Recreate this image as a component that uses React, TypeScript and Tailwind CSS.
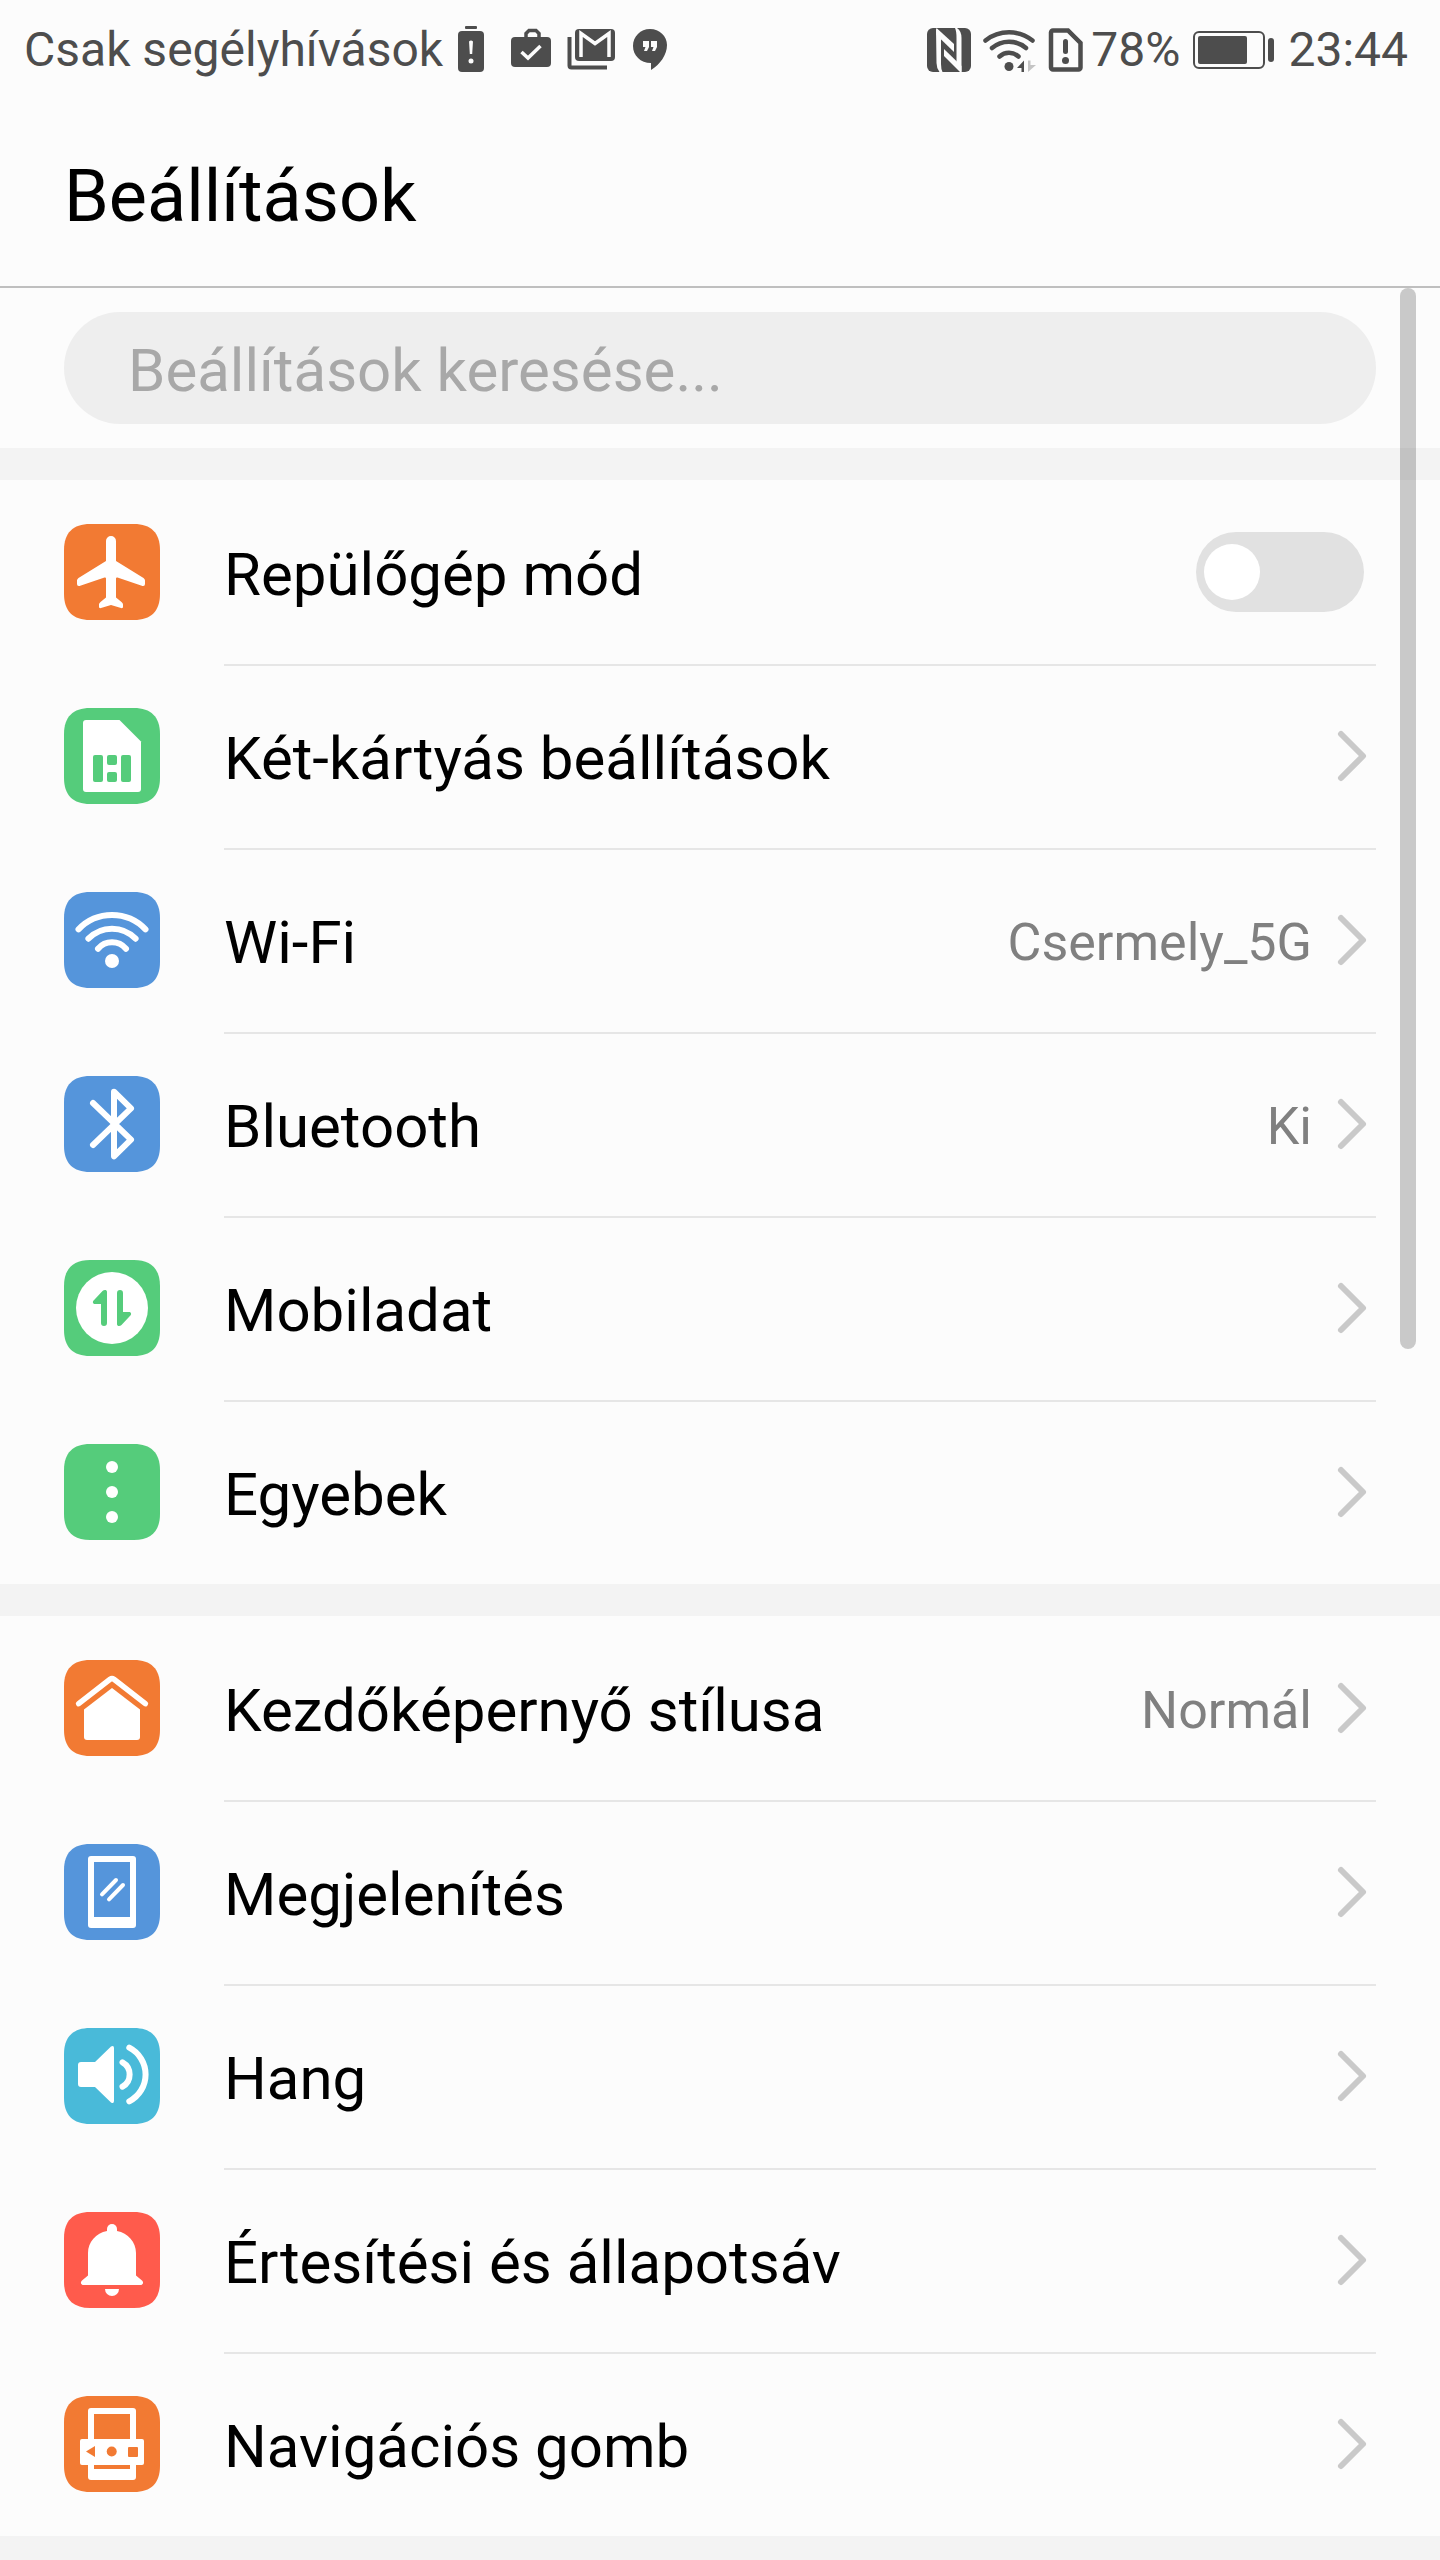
import React from "react";

type Item = {
  label: string;
  icon: React.ReactNode;
  value?: string;
  toggle?: boolean;
};

const ORANGE = "#f27a33";
const GREEN = "#55cc7b";
const BLUE = "#5595db";
const CYAN = "#49bad9";
const RED = "#ff5b4c";

const Tile = ({ color, children }: { color: string; children: React.ReactNode }) => (
  <svg viewBox="0 0 96 96" className="size-24 shrink-0" fill="white" aria-hidden="true">
    <path
      d="M26 0H70C87 0 96 9 96 26V70C96 87 87 96 70 96H26C9 96 0 87 0 70V26C0 9 9 0 26 0Z"
      fill={color}
    />
    {children}
  </svg>
);

const airplane = (
  <Tile color={ORANGE}>
    <path d="M42 17a5 5 0 0 1 10 0V37L79.5 54q1.5 1 1.5 2.5V60q0 2.5-2.5 2L53.5 53.5q-1.5-.3-1.5 1V73.5L57.5 78q1.5 1 1.5 2.5V83q0 1.5-2 1L47 81l-10 3q-2 .5-2-1V80.5q0-1.5 1.5-2.5L42 73.5V54.5q0-1.3-1.5-1L15.5 62q-2.5.5-2.5-2V56.5q0-1.5 1.5-2.5L42 37Z" />
  </Tile>
);

const simCard = (
  <Tile color={GREEN}>
    <path d="M22 12H55.5L77 33.5V81a3 3 0 0 1-3 3H22a3 3 0 0 1-3-3V15a3 3 0 0 1 3-3Z" />
    <g fill={GREEN}>
      <rect x="29" y="47" width="10" height="27" rx="2" />
      <rect x="43" y="47" width="10" height="10" rx="2" />
      <rect x="43" y="64" width="10" height="10" rx="2" />
      <rect x="57" y="47" width="10" height="27" rx="2" />
    </g>
  </Tile>
);

const wifi = (
  <Tile color={BLUE}>
    <g fill="none" stroke="white" strokeWidth="6" strokeLinecap="round">
      <path d="M14.5 37.3A46.4 46.4 0 0 1 81.5 37.3" />
      <path d="M24.4 46.7A32.8 32.8 0 0 1 71.6 46.7" />
      <path d="M34 56.7A18.5 18.5 0 0 1 62 56.7" />
    </g>
    <circle cx="48" cy="69" r="7" />
  </Tile>
);

const bluetooth = (
  <Tile color={BLUE}>
    <path
      d="M29 27L67 63.7L50 80.3V15.7L67 32.3L29 69"
      fill="none"
      stroke="white"
      strokeWidth="6"
      strokeLinecap="round"
      strokeLinejoin="round"
    />
  </Tile>
);

const DataArrow = ({ rotate = 0 }) => (
  <path
    d="M43 32V63a3 3 0 0 1-6 0V44H31C29 44 28.2 42 29.6 40.5L38.5 31C40 29.5 43 29.5 43 32Z"
    fill={GREEN}
    transform={`rotate(${rotate} 48 48)`}
  />
);

const mobileData = (
  <Tile color={GREEN}>
    <circle cx="48" cy="48" r="36" />
    <DataArrow />
    <DataArrow rotate={180} />
  </Tile>
);

const more = (
  <Tile color={GREEN}>
    <circle cx="48" cy="23" r="6" />
    <circle cx="48" cy="48" r="6" />
    <circle cx="48" cy="73" r="6" />
  </Tile>
);

const home = (
  <Tile color={ORANGE}>
    <path
      d="M14.7 43.7L46 19.3Q48 18 50 19.3L81.3 43.7"
      fill="none"
      stroke="white"
      strokeWidth="5.5"
      strokeLinecap="round"
    />
    <path d="M48 28L76 49.5V77a3 3 0 0 1-3 3H23a3 3 0 0 1-3-3V49.5Z" />
  </Tile>
);

const display = (
  <Tile color={BLUE}>
    <rect x="24" y="12" width="48" height="72" rx="3" />
    <rect x="30" y="18" width="36" height="55" fill={BLUE} />
    <path
      d="M38 50.3L52 36M45 55.3L59 41"
      stroke="white"
      strokeWidth="4"
      strokeLinecap="round"
    />
  </Tile>
);

const sound = (
  <Tile color={CYAN}>
    <path d="M17 34H31L47 18.5Q50 17 50 20V73Q50 76 47 74.5L31 59H17a3 3 0 0 1-3-3V37a3 3 0 0 1 3-3Z" />
    <g fill="none" stroke="white" strokeWidth="6" strokeLinecap="round">
      <path d="M58.5 34.3A14 14 0 0 1 58.5 58.7" />
      <path d="M65.3 19.7A30.2 30.2 0 0 1 65.3 73.3" />
    </g>
  </Tile>
);

const bell = (
  <Tile color={RED}>
    <circle cx="48" cy="17" r="5" />
    <path d="M43 17H53V19C64 21 72 30 72 41V63.5L78 68.5C80 70.5 79 73 76.5 73H19.5C17 73 16 70.5 18 68.5L24 63.5V41C24 30 32 21 43 19Z" />
    <path d="M41 77H55A7 7 0 0 1 41 77Z" />
  </Tile>
);

const navButton = (
  <Tile color={ORANGE}>
    <rect x="24" y="12" width="48" height="72" rx="3" />
    <rect x="30" y="18" width="36" height="55" fill={ORANGE} />
    <rect x="16" y="43" width="64" height="26" rx="2" />
    <g fill={ORANGE}>
      <path d="M22 55.5L31 50V61Z" />
      <circle cx="47.7" cy="55.5" r="5" />
      <rect x="64" y="51" width="10" height="10" rx="1" />
    </g>
  </Tile>
);

const groups: Item[][] = [
  [
    { label: "Repülőgép mód", icon: airplane, toggle: true },
    { label: "Két-kártyás beállítások", icon: simCard },
    { label: "Wi-Fi", icon: wifi, value: "Csermely_5G" },
    { label: "Bluetooth", icon: bluetooth, value: "Ki" },
    { label: "Mobiladat", icon: mobileData },
    { label: "Egyebek", icon: more },
  ],
  [
    { label: "Kezdőképernyő stílusa", icon: home, value: "Normál" },
    { label: "Megjelenítés", icon: display },
    { label: "Hang", icon: sound },
    { label: "Értesítési és állapotsáv", icon: bell },
    { label: "Navigációs gomb", icon: navButton },
  ],
];

const Notifications = () => (
  <div className="flex items-center gap-4">
    {/* low battery */}
    <svg viewBox="0 0 32 48" className="h-12 w-8" fill="currentColor" aria-hidden="true">
      <rect x="10" y="0" width="12" height="3" rx="1" />
      <rect x="3" y="5" width="26" height="41" rx="4" />
      <path d="M14 15.5q2-2 4 0L17.2 28h-2.4Z" fill="#fcfcfc" />
      <circle cx="16" cy="35" r="2.5" fill="#fcfcfc" />
    </svg>
    {/* briefcase */}
    <svg viewBox="0 0 48 48" className="size-12" fill="currentColor" aria-hidden="true">
      <path d="M23 13V7.5L26 4.5H33L36 7.5V13" fill="none" stroke="currentColor" strokeWidth="3.5" />
      <rect x="8" y="11" width="40" height="30" rx="4" />
      <path d="M18.5 26L25 32L37.5 20" fill="none" stroke="#fcfcfc" strokeWidth="3.5" />
    </svg>
    {/* stacked mails */}
    <svg viewBox="0 0 48 48" className="size-12" fill="currentColor" aria-hidden="true">
      <path d="M2.5 11V39.5a2 2 0 0 0 2 2H40" fill="none" stroke="currentColor" strokeWidth="4" />
      <rect x="8" y="3" width="40" height="32" rx="4" />
      <path d="M14 31V7.5L28 17.5L42 7.5V31" fill="none" stroke="#fcfcfc" strokeWidth="3.5" />
    </svg>
    {/* chat bubble */}
    <svg viewBox="0 0 40 48" className="h-12 w-10" fill="currentColor" aria-hidden="true">
      <path d="M19 3C28.5 3 36 10 36 19C36 29 29 38.5 20 44V37C9.5 37 2 29.5 2 20C2 10.5 9.5 3 19 3Z" />
      <path d="M12 15h6v6l-2 4h-3l1.5-4H12ZM20 15h6v6l-2 4h-3l1.5-4H20Z" fill="#fcfcfc" />
    </svg>
  </div>
);

const Connectivity = () => (
  <>
    {/* nfc */}
    <svg viewBox="0 0 48 44" className="h-11 w-12" aria-hidden="true">
      <rect width="44" height="44" rx="6" fill="currentColor" />
      <g fill="#fcfcfc">
        <path d="M9 0.5L14 5.5V36Q14 41 15.5 44H12.5Q9.5 40 9.5 35Z" />
        <path d="M9.5 0L27 16V24L9.5 7Z" />
        <path d="M17 21L34.5 38V44H33L17 28Z" />
        <path d="M30 0Q34.5 3 34.5 10V44L29.5 38V10Q29.5 3 28 0Z" />
      </g>
    </svg>
    {/* wifi with traffic arrows */}
    <svg viewBox="0 0 56 44" className="h-11 w-14" fill="currentColor" aria-hidden="true">
      <g fill="none" stroke="currentColor" strokeWidth="4.5" strokeLinecap="round">
        <path d="M2.5 12.5A38 38 0 0 1 49.5 12.5" />
        <path d="M9 20A26 26 0 0 1 43 20" />
        <path d="M16.5 28.5A14 14 0 0 1 35.5 28.5" />
      </g>
      <circle cx="26" cy="38.5" r="4.5" />
      <path d="M34 40L41 32.5V44H38.5V40Z" />
      <path d="M45 32.5H47.5V37H53L45 44Z" fill="#c4c4c4" />
    </svg>
    {/* missing sim */}
    <svg viewBox="0 0 36 44" className="h-11 w-9" fill="currentColor" aria-hidden="true">
      <path
        d="M6 2.5H21L33.5 15V39.5a2 2 0 0 1-2 2H6a2 2 0 0 1-2-2V4.5a2 2 0 0 1 2-2Z"
        fill="none"
        stroke="currentColor"
        strokeWidth="4.5"
      />
      <rect x="16" y="11" width="5" height="15" rx="2.5" />
      <circle cx="18.5" cy="32.5" r="3.5" />
    </svg>
  </>
);

const Battery = () => (
  <svg viewBox="0 0 92 44" className="h-11 w-23" fill="currentColor" aria-hidden="true">
    <rect x="6" y="4" width="70" height="36" rx="5" fill="none" stroke="currentColor" strokeWidth="2" />
    <rect x="10" y="8" width="49" height="28" rx="2" />
    <rect x="80" y="10" width="6" height="24" rx="3" />
  </svg>
);

const StatusBar = () => (
  <div className="flex h-25 items-center justify-between pr-8 pl-6 text-5xl text-[#4d4d4d]">
    <div className="flex items-center gap-3">
      <span>Csak segélyhívások</span>
      <Notifications />
    </div>
    <div className="flex items-center gap-2">
      <Connectivity />
      <span>78%</span>
      <Battery />
      <span>23:44</span>
    </div>
  </div>
);

const Chevron = () => (
  <svg viewBox="0 0 32 56" className="mr-2 ml-6 h-14 w-8 shrink-0" aria-hidden="true">
    <path
      d="M5 6L27 28L5 50"
      fill="none"
      stroke="#c9c9c9"
      strokeWidth="6"
      strokeLinecap="round"
      strokeLinejoin="round"
    />
  </svg>
);

const Row = ({ item, first }: { item: Item; first: boolean }) => {
  const body = (
    <>
      {item.icon}
      <div
        className={`flex h-46 min-w-0 flex-1 items-center border-t-2 pb-0.5 ${
          first ? "border-transparent" : "border-[#e6e6e6]"
        }`}
      >
        <span className="flex-1 truncate pt-1.5 text-6xl leading-20 text-black">{item.label}</span>
        {item.value && <span className="pt-1.5 text-[52px] leading-16 text-[#808080]">{item.value}</span>}
        {item.toggle ? (
          <input
            type="checkbox"
            role="switch"
            className="mr-3 flex h-20 w-42 appearance-none items-center rounded-full bg-[#e1e1e1] px-2 before:size-14 before:rounded-full before:bg-white checked:justify-end checked:bg-[#5595db]"
          />
        ) : (
          <Chevron />
        )}
      </div>
    </>
  );

  return (
    <li>
      {item.toggle ? (
        <label className="flex items-center gap-16 px-16">{body}</label>
      ) : (
        <a href="#" className="flex items-center gap-16 px-16">
          {body}
        </a>
      )}
    </li>
  );
};

const App = () => {
  return (
    <div className="flex min-h-screen flex-col bg-[#fcfcfc] font-[Roboto,sans-serif]">
      <header className="border-b-2 border-[#bfbfbf]">
        <StatusBar />
        <h1 className="px-16 pt-12 pb-10 text-7xl leading-[98px] text-black">Beállítások</h1>
      </header>
      <main className="relative flex flex-1 flex-col">
        <div className="px-16 py-6">
          <input
            type="search"
            aria-label="Beállítások keresése"
            placeholder="Beállítások keresése..."
            className="block h-28 w-full rounded-full bg-[#eeeeee] px-16 pt-1 text-6xl text-black placeholder:text-[#a8a8a8]"
          />
        </div>
        {groups.map((group, i) => (
          <ul key={i} className="border-t-32 border-[#f3f3f3]">
            {group.map((item, j) => (
              <Row key={item.label} item={item} first={j === 0} />
            ))}
          </ul>
        ))}
        <div className="min-h-6 flex-1 bg-[#f3f3f3]" />
        {/* scroll indicator */}
        <div className="absolute top-0 right-6 h-[1061px] w-4 rounded-full bg-black/20" />
      </main>
    </div>
  );
};

export default App;
